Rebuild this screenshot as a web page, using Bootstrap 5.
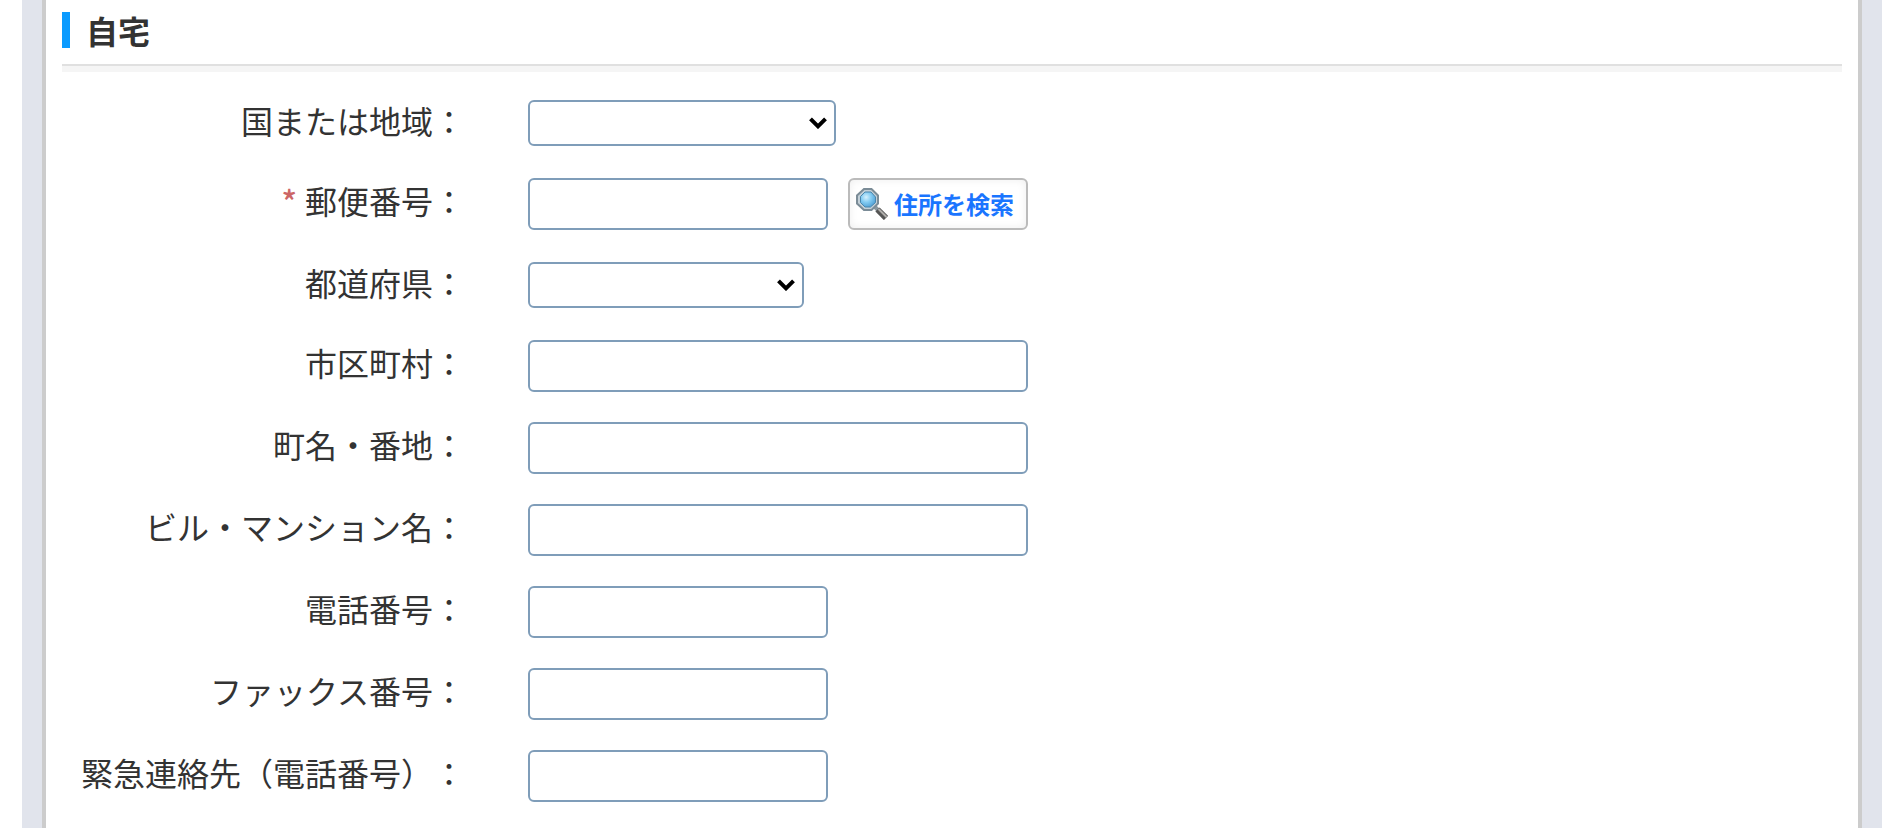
<!DOCTYPE html>
<html lang="ja">
<head>
<meta charset="utf-8">
<meta name="viewport" content="width=device-width, initial-scale=1">
<title>自宅</title>
<link rel="stylesheet" href="https://cdn.jsdelivr.net/npm/bootstrap@5.3.0/dist/css/bootstrap.min.css">
<style>
body { font-family: "Noto Sans CJK JP", sans-serif; font-size: 32px; line-height: 44px; color: #333; background: #fff; text-spacing-trim: space-all; font-feature-settings: "chws" 0; }
.page-frame { background: #e1e4ec; margin: 0 22px; padding: 0 20px; }
.sheet { background: #fff; border: solid #ccc; border-width: 0 4px; padding: 12px 16px 11px; }
.section-head { border-bottom: 2px solid #e0e0e0; box-shadow: 0 6px 0 #f5f5f5; padding-bottom: 16px; margin-bottom: 17px; }
.section-title { border-left: 8px solid #0a9bff; padding-left: 16px; margin: 0; font-size: 32px; line-height: 36px; font-weight: 700; }
.form-line { padding: 15px 0; column-gap: 63px; }
.form-line.has-select { padding: 17px 0; }
.line-label { flex: 0 0 403px; text-align: right; height: 46px; }
.has-select .line-label { margin-top: -2px; }
.required { color: #c66; margin-right: 8px; font-weight: 500; }
.form-control, .form-select { border: 2px solid #7f9db9; border-radius: 6px; padding: 0 8px; font-size: 26px; line-height: 40px; }
.form-control { height: 52px; }
.form-select { height: 46px; padding-right: 36px; background: #fff url("data:image/svg+xml,%3Csvg xmlns='http://www.w3.org/2000/svg' viewBox='0 0 18 12'%3E%3Cpath d='M1.5 1.8 9 9.3l7.500-7.500' fill='none' stroke='%23000' stroke-width='4'/%3E%3C/svg%3E") no-repeat right 7px center / 18px 12px; }
.w-country { width: 308px; }
.w-pref { width: 276px; }
.w-short { width: 300px; }
.w-long { width: 500px; }
.zip-group { column-gap: 20px; }
.btn-lookup { width: 180px; height: 52px; padding: 0 6px; gap: 6px; border: 2px solid #bbb; border-radius: 6px; background: #fff; box-shadow: inset 0 0 8px #eee; color: #1a75ff; font-size: 24px; line-height: 36px; font-weight: 700; white-space: nowrap; }
.btn-lookup svg { flex: none; }
</style>
</head>
<body>
<div class="page-frame">
<main class="sheet">
  <header class="section-head"><h2 class="section-title">自宅</h2></header>
  <form>
    <div class="form-line has-select d-flex">
      <label class="line-label" for="country">国または地域<span>：</span></label>
      <select class="form-select w-country" id="country"><option></option></select>
    </div>
    <div class="form-line d-flex">
      <label class="line-label" for="zip"><span class="required">*</span>郵便番号<span>：</span></label>
      <div class="zip-group d-flex">
        <input class="form-control w-short" type="text" id="zip">
        <button class="btn btn-lookup d-flex align-items-center" type="button">
          <svg width="32" height="32" viewBox="0 0 32 32" aria-hidden="true">
            <defs>
              <radialGradient id="lens" cx="38%" cy="35%" r="65%"><stop offset="0" stop-color="#d5f0fd"/><stop offset=".5" stop-color="#86cdf3"/><stop offset="1" stop-color="#56a5d8"/></radialGradient>
            </defs>
            <path d="M19 19l3 3" stroke="#8b979e" stroke-width="4"/>
            <path d="M21.500 21.500l8.500 8.500" stroke="#555" stroke-width="6"/>
            <path d="M22.500 21l8 8" stroke="#b0aeab" stroke-width="2"/>
            <path d="M8 1h7.500L22 7.500v8L15.500 22H8l-7-6.500v-8z" fill="#c3d0d8" stroke="#7b8c97" stroke-width="2"/>
            <path d="M9 4h6l4.500 5v5.500l-5 4.500H9l-4.500-4.500V8.500z" fill="url(#lens)" stroke="#4a86ad" stroke-width="1"/>
          </svg>
          <span>住所を検索</span>
        </button>
      </div>
    </div>
    <div class="form-line has-select d-flex">
      <label class="line-label" for="pref">都道府県<span>：</span></label>
      <select class="form-select w-pref" id="pref"><option></option></select>
    </div>
    <div class="form-line d-flex">
      <label class="line-label" for="city">市区町村<span>：</span></label>
      <input class="form-control w-long" type="text" id="city">
    </div>
    <div class="form-line d-flex">
      <label class="line-label" for="street">町名・番地<span>：</span></label>
      <input class="form-control w-long" type="text" id="street">
    </div>
    <div class="form-line d-flex">
      <label class="line-label" for="building">ビル・マンション名<span>：</span></label>
      <input class="form-control w-long" type="text" id="building">
    </div>
    <div class="form-line d-flex">
      <label class="line-label" for="phone">電話番号<span>：</span></label>
      <input class="form-control w-short" type="tel" id="phone">
    </div>
    <div class="form-line d-flex">
      <label class="line-label" for="fax">ファックス番号<span>：</span></label>
      <input class="form-control w-short" type="tel" id="fax">
    </div>
    <div class="form-line d-flex">
      <label class="line-label" for="emergency">緊急連絡先（電話番号）<span>：</span></label>
      <input class="form-control w-short" type="tel" id="emergency">
    </div>
  </form>
</main>
</div>
<script src="https://cdn.jsdelivr.net/npm/bootstrap@5.3.0/dist/js/bootstrap.bundle.min.js"></script>
</body>
</html>
